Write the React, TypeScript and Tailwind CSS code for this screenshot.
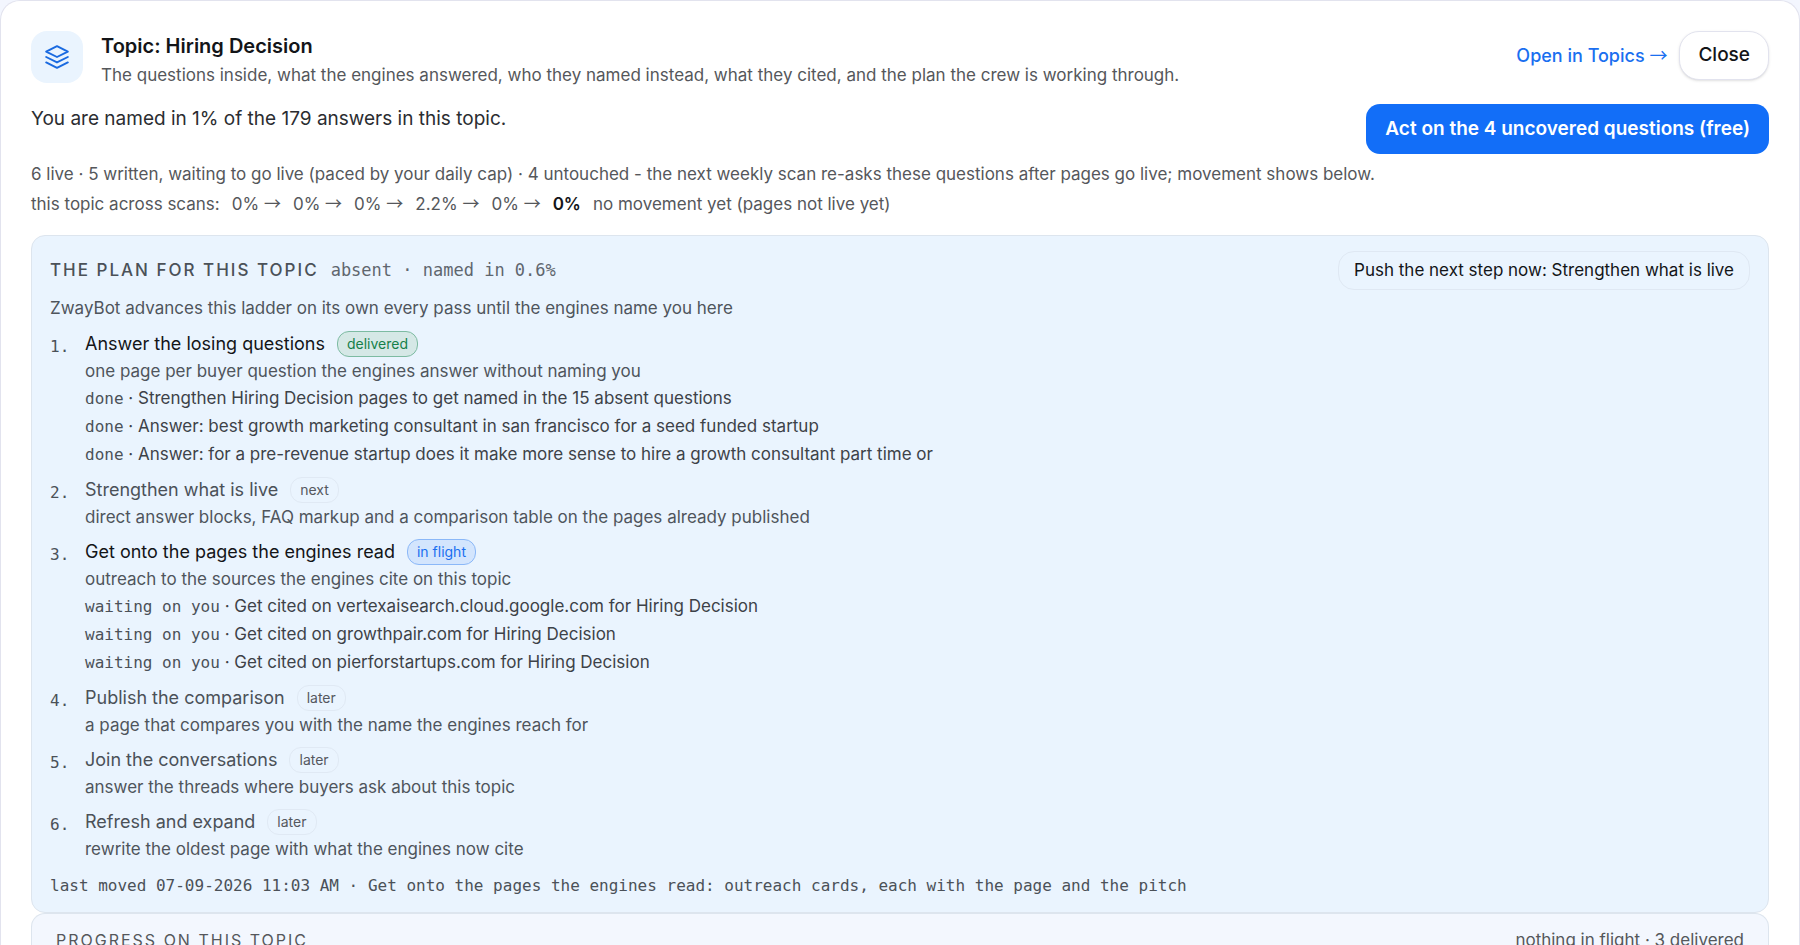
import React from "react";

type Step = {
  title: string;
  status: "delivered" | "in flight" | "next" | "later";
  note: string;
  state?: string;
  tasks?: string[];
};

const steps: Step[] = [
  {
    title: "Answer the losing questions",
    status: "delivered",
    note: "one page per buyer question the engines answer without naming you",
    state: "done",
    tasks: [
      "Strengthen Hiring Decision pages to get named in the 15 absent questions",
      "Answer: best growth marketing consultant in san francisco for a seed funded startup",
      "Answer: for a pre-revenue startup does it make more sense to hire a growth consultant part time or",
    ],
  },
  {
    title: "Strengthen what is live",
    status: "next",
    note: "direct answer blocks, FAQ markup and a comparison table on the pages already published",
  },
  {
    title: "Get onto the pages the engines read",
    status: "in flight",
    note: "outreach to the sources the engines cite on this topic",
    state: "waiting on you",
    tasks: [
      "Get cited on vertexaisearch.cloud.google.com for Hiring Decision",
      "Get cited on growthpair.com for Hiring Decision",
      "Get cited on pierforstartups.com for Hiring Decision",
    ],
  },
  {
    title: "Publish the comparison",
    status: "later",
    note: "a page that compares you with the name the engines reach for",
  },
  {
    title: "Join the conversations",
    status: "later",
    note: "answer the threads where buyers ask about this topic",
  },
  {
    title: "Refresh and expand",
    status: "later",
    note: "rewrite the oldest page with what the engines now cite",
  },
];

const scans = ["0%", "0%", "0%", "2.2%", "0%"];

const badgeStyles = {
  delivered: "border-[#7dbba2] bg-[#d5e8e6] text-[#16804a]",
  "in flight": "border-[#8bb8f8] bg-[#d3e5fd] text-[#1a6ff0]",
  next: "border-[#e0e9f4] text-[#55585e]",
  later: "border-[#e0e9f4] text-[#55585e]",
};

const LayersIcon = () => (
  <svg
    width="26"
    height="26"
    viewBox="0 0 24 24"
    fill="none"
    stroke="currentColor"
    strokeWidth="1.8"
    strokeLinecap="round"
    strokeLinejoin="round"
    aria-hidden="true"
  >
    <path d="M12 2 2 7l10 5 10-5-10-5Z" />
    <path d="m2 12 10 5 10-5" />
    <path d="m2 17 10 5 10-5" />
  </svg>
);

const Arrow = () => (
  <span className="font-['Noto_Sans_CJK_SC',sans-serif] leading-none font-normal">
    →
  </span>
);

const StepItem = ({ step, index }: { step: Step; index: number }) => {
  const active = step.status === "delivered" || step.status === "in flight";
  return (
    <li className="flex">
      <span className="w-[35px] shrink-0 pt-1 font-['DejaVu_Sans_Mono',monospace] text-[16px] leading-[26px] text-[#4b5158]">
        {index + 1}.
      </span>
      <div className="min-w-0">
        <div className="flex h-7 items-center gap-3">
          <h3
            className={`text-[18px] leading-[26px] ${
              active ? "text-[#131518]" : "text-[#4b5158]"
            }`}
          >
            {step.title}
          </h3>
          <span
            className={`rounded-[12px] border px-[9px] text-[14px] leading-6 ${
              badgeStyles[step.status]
            }`}
          >
            {step.status}
          </span>
        </div>
        <p className="leading-[26px] text-[#4f555c]">{step.note}</p>
        {step.tasks && (
          <ul>
            {step.tasks.map((task) => (
              <li key={task} className="leading-7 text-[#3d4248]">
                <span className="font-['DejaVu_Sans_Mono',monospace] text-[16px] leading-none text-[#4b5158]">
                  {step.state}
                </span>{" "}
                · {task}
              </li>
            ))}
          </ul>
        )}
      </div>
    </li>
  );
};

export default function App() {
  return (
    <div className="min-h-screen bg-[#f3f6fe] font-['Inter',sans-serif] text-[17px] text-[#55575b]">
      <main className="min-h-screen rounded-t-[20px] border border-b-0 border-[#e2e3ee] bg-white px-[30px] pt-[30px]">
        <header className="flex items-start justify-between">
          <div className="flex gap-[18px]">
            <div className="flex size-[52px] items-center justify-center rounded-[16px] bg-[#eaf4fe] text-[#1a6ae0]">
              <LayersIcon />
            </div>
            <div>
              <h1 className="text-[20px] leading-[30px] font-semibold text-[#131518]">
                Topic: Hiring Decision
              </h1>
              <p className="leading-7">
                The questions inside, what the engines answered, who they named
                instead, what they cited, and the plan the crew is working through.
              </p>
            </div>
          </div>
          <div className="flex items-center gap-3">
            <a href="#topics" className="text-[18px] font-medium text-[#1a6ff0]">
              Open in Topics <Arrow />
            </a>
            <button
              type="button"
              className="h-[49px] rounded-[20px] border border-[#e2e3ee] bg-white px-[18px] text-[19px] font-medium text-[#131518] shadow-sm"
            >
              Close
            </button>
          </div>
        </header>

        <section className="mt-[15px]">
          <div className="flex items-start justify-between">
            <p className="text-[19px] leading-[30px] text-[#2b2d31]">
              You are named in 1% of the 179 answers in this topic.
            </p>
            <button
              type="button"
              className="h-[50px] rounded-[14px] bg-[#126ef8] px-[19px] text-[19px] font-semibold text-white"
            >
              Act on the 4 uncovered questions (free)
            </button>
          </div>
          <p className="mt-2 leading-6">
            6 live · 5 written, waiting to go live (paced by your daily cap) · 4
            untouched - the next weekly scan re-asks these questions after pages
            go live; movement shows below.
          </p>
          <p className="mt-1 flex gap-3 leading-7">
            <span>this topic across scans:</span>
            {scans.map((scan, i) => (
              <span key={i}>
                {scan} <Arrow />
              </span>
            ))}
            <b className="font-semibold text-[#131518]">0%</b>
            <span>no movement yet (pages not live yet)</span>
          </p>
        </section>

        <section className="mt-[17px] rounded-[14px] border border-[#dde5ee] bg-[#eaf4fe] px-[18px] pt-[15px] pb-[14px]">
          <div className="flex items-center justify-between">
            <div className="flex items-baseline gap-3">
              <h2 className="font-medium tracking-[2px] text-[#4b5158]">
                THE PLAN FOR THIS TOPIC
              </h2>
              <span className="font-['DejaVu_Sans_Mono',monospace] text-[#5f666e]">
                absent · named in 0.6%
              </span>
            </div>
            <button
              type="button"
              className="h-[39px] rounded-[16px] border border-[#dfe8f3] px-[15px] text-[#131518]"
            >
              Push the next step now: Strengthen what is live
            </button>
          </div>
          <p className="mt-[6px] leading-6 text-[#4f555c]">
            ZwayBot advances this ladder on its own every pass until the engines
            name you here
          </p>
          <ol className="mt-[10px] flex flex-col gap-2">
            {steps.map((step, i) => (
              <StepItem key={step.title} step={step} index={i} />
            ))}
          </ol>
          <p className="mt-3 font-['DejaVu_Sans_Mono',monospace] text-[16px] leading-6 text-[#4b5158]">
            last moved 07-09-2026 11:03 AM · Get onto the pages the engines read:
            outreach cards, each with the page and the pitch
          </p>
        </section>

        <section className="flex items-baseline justify-between rounded-t-[14px] border border-b-0 border-[#dde5ee] bg-[#f3f7fe] px-6 pt-[14px]">
          <h2 className="text-[16px] tracking-[2px]">PROGRESS ON THIS TOPIC</h2>
          <span>nothing in flight · 3 delivered</span>
        </section>
      </main>
    </div>
  );
}
